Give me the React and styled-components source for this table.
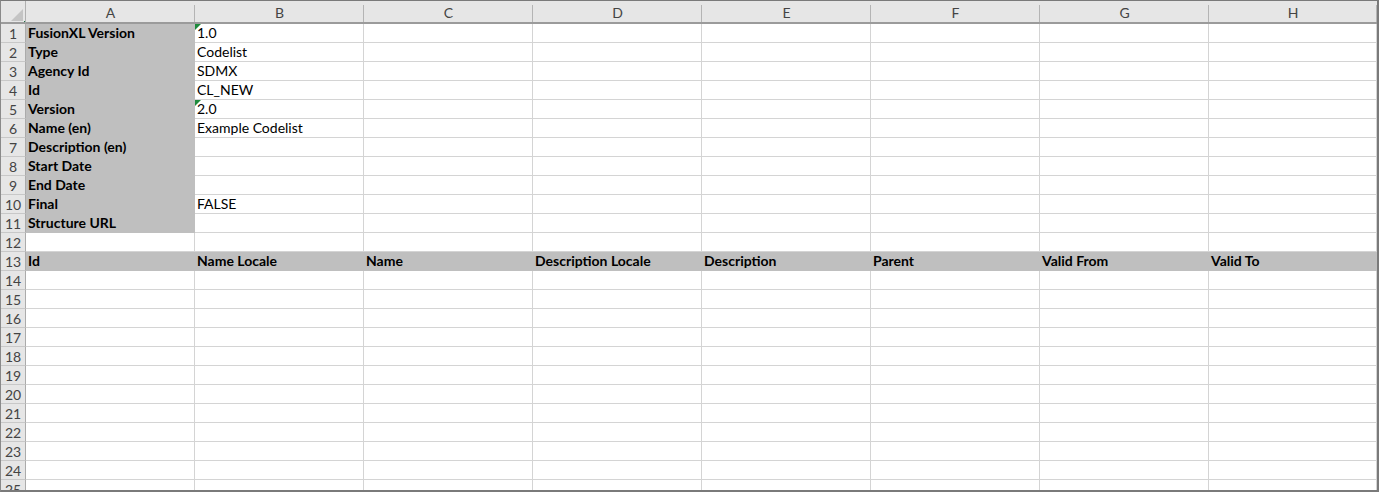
import styled, { createGlobalStyle } from 'styled-components'

const GlobalStyle = createGlobalStyle`
  html, body {
    margin: 0;
    padding: 0;
    background: #fff;
  }
  body {
    font-family: Lato, "Liberation Sans", sans-serif;
  }
`

const columns = ['A', 'B', 'C', 'D', 'E', 'F', 'G', 'H']

const meta = [
  ['FusionXL Version', '1.0', true],
  ['Type', 'Codelist'],
  ['Agency Id', 'SDMX'],
  ['Id', 'CL_NEW'],
  ['Version', '2.0', true],
  ['Name (en)', 'Example Codelist'],
  ['Description (en)', ''],
  ['Start Date', ''],
  ['End Date', ''],
  ['Final', 'FALSE'],
  ['Structure URL', ''],
]

const headings = ['Id', 'Name Locale', 'Name', 'Description Locale', 'Description', 'Parent', 'Valid From', 'Valid To']

const TOTAL_ROWS = 25

const App = () => {
  const rows = []
  for (let r = 1; r <= TOTAL_ROWS; r++) {
    const cells = columns.map((col, c) => {
      let text = ''
      let filled = false
      let bold = false
      let marker = false
      if (r <= meta.length) {
        if (c === 0) {
          text = meta[r - 1][0]
          filled = true
          bold = true
        } else if (c === 1) {
          text = meta[r - 1][1]
          marker = !!meta[r - 1][2]
        }
      } else if (r === 13) {
        text = headings[c]
        filled = true
        bold = true
      }
      return (
        <Cell key={col} $filled={filled} $bold={bold} $marker={marker}>
          {text}
        </Cell>
      )
    })
    rows.push(
      <RowNumber key={'n' + r}>{r}</RowNumber>,
      ...cells
    )
  }

  return (
    <>
      <GlobalStyle />
      <Sheet>
        <Corner>
          <svg width="24" height="21" viewBox="0 0 24 21">
            <polygon points="22,8 22,20 10,20" fill="#c4c4c4" />
            <rect x="23" y="20" width="1" height="1" fill="#217346" />
          </svg>
        </Corner>
        {columns.map(col => (
          <ColumnHeader key={col}>{col}</ColumnHeader>
        ))}
        {rows}
      </Sheet>
    </>
  )
}

const Sheet = styled.div`
  box-sizing: border-box;
  width: 1379px;
  height: 492px;
  overflow: hidden;
  border-top: 1px solid #7a7a7a;
  border-left: 1px solid #8a8a8a;
  border-right: 2px solid #7a7a7a;
  border-bottom: 2px solid #7a7a7a;
  display: grid;
  grid-template-columns: 25px repeat(7, 169px) 1fr;
  grid-template-rows: 23px repeat(${TOTAL_ROWS}, 19px);
  background: #fff;
`

const Corner = styled.div`
  background: #e6e6e6;
  border-bottom: 2px solid #9b9b9b;
  border-right: 1px solid #b0b0b0;
  box-sizing: border-box;
  svg {
    display: block;
  }
`

const ColumnHeader = styled.div`
  box-sizing: border-box;
  background-color: #e6e6e6;
  background-image: linear-gradient(#b4b4b4, #b4b4b4);
  background-repeat: no-repeat;
  background-position: right bottom;
  background-size: 1px calc(100% - 4px);
  border-bottom: 2px solid #9b9b9b;
  color: #444;
  font-size: 14px;
  display: flex;
  align-items: center;
  justify-content: center;
  padding-top: 1px;
`

const RowNumber = styled.div`
  box-sizing: border-box;
  background: #e6e6e6;
  border-right: 1px solid #ababab;
  border-bottom: 1px solid #c8c8c8;
  color: #444;
  font-size: 14px;
  display: flex;
  align-items: center;
  justify-content: center;
`

const Cell = styled.div`
  position: relative;
  box-sizing: border-box;
  background: ${p => (p.$filled ? '#bfbfbf' : '#fff')};
  border-right: 1px solid ${p => (p.$filled ? '#bfbfbf' : '#d4d4d4')};
  border-bottom: 1px solid ${p => (p.$filled ? '#bfbfbf' : '#d4d4d4')};
  color: #000;
  font-size: 14px;
  font-weight: ${p => (p.$bold ? 700 : 400)};
  padding: 0 2px 1px;
  white-space: nowrap;
  display: flex;
  align-items: flex-end;
  line-height: 17px;

  &::before {
    content: '';
    display: ${p => (p.$marker ? 'block' : 'none')};
    position: absolute;
    top: 0;
    left: 0;
    border-top: 6px solid #1e8a3c;
    border-right: 6px solid transparent;
  }
`

export default App
